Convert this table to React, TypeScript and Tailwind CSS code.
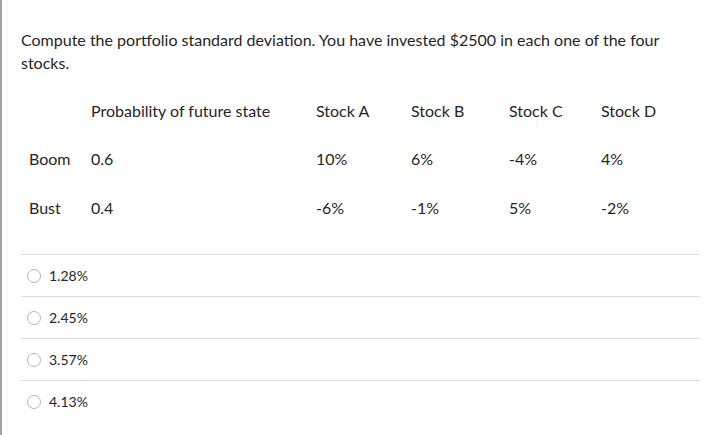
const rows = [
  { state: "Boom", prob: "0.6", vals: ["10%", "6%", "-4%", "4%"] },
  { state: "Bust", prob: "0.4", vals: ["-6%", "-1%", "5%", "-2%"] },
];

const options = ["1.28%", "2.45%", "3.57%", "4.13%"];

const cols = "grid grid-cols-[62px_225px_95px_98px_92px_1fr]";

export default function App() {
  return (
    <div
      className="min-h-[435px] w-[719px] bg-white border-l-2 border-[#a3a3a3] text-[#262626] text-[16px]"
      style={{ fontFamily: "Lato, 'Liberation Sans', sans-serif" }}
    >
      <div className="pl-[19px] pr-[19px] pt-[28px]">
        <p className="leading-[23px]">
          Compute the portfolio standard deviation. You have invested $2500 in each one of the four stocks.
        </p>

        {/* returns table */}
        <div className="mt-[14px] pl-[8px]">
          <div className={`${cols} h-[46px] items-center`}>
            <div />
            <div>Probability of future state</div>
            <div>Stock A</div>
            <div>Stock B</div>
            <div>Stock C</div>
            <div>Stock D</div>
          </div>
          {rows.map((r) => (
            <div key={r.state} className={`${cols} h-[49px] items-center`}>
              <div>{r.state}</div>
              <div>{r.prob}</div>
              {r.vals.map((v, i) => (
                <div key={i}>{v}</div>
              ))}
            </div>
          ))}
        </div>

        {/* answer choices */}
        <div className="mt-[22px]">
          {options.map((o) => (
            <label key={o} className="flex items-center h-[42px] border-t border-[#dcdcdc] pl-[6px] gap-[8px]">
              <span className="w-[14px] h-[14px] rounded-full border border-[#b5b5b5] bg-white" />
              <span className="text-[14px]">{o}</span>
            </label>
          ))}
        </div>
      </div>
    </div>
  );
}
